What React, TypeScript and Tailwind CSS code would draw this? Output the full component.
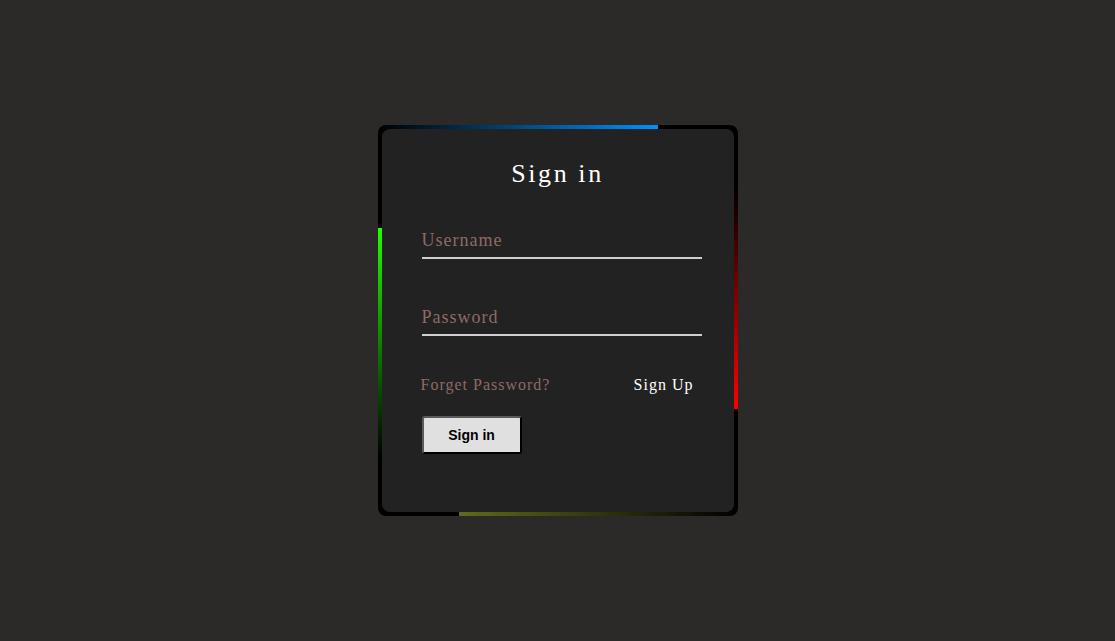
export default function App() {
  return (
    <div className="min-h-screen w-full bg-[#2c2a28] flex items-center justify-center">
      <div className="relative w-[360px] h-[391px] bg-black rounded-[8px] overflow-hidden p-[4px] flex">
        {/* moving border streaks */}
        <span className="absolute left-0 top-0 h-[4px] w-[280px] bg-gradient-to-r from-transparent to-[#0091ff]" />
        <span className="absolute right-0 top-[64px] w-[4px] h-[220px] bg-gradient-to-b from-transparent to-[#ff0000]" />
        <span className="absolute left-[81px] bottom-0 h-[4px] w-[279px] bg-gradient-to-r from-[#606b1a] to-transparent" />
        <span className="absolute left-0 top-[103px] w-[4px] h-[230px] bg-gradient-to-b from-[#22ff00] to-transparent" />

        <div className="relative z-10 flex-1 bg-[#222222] rounded-[8px] flex flex-col items-start pt-[30px] font-['Liberation_Serif',serif]">
          <h2 className="w-full text-center text-white text-[26px] leading-[29px] tracking-[0.1em]">Sign in</h2>

          <div className="ml-[40px] mt-[42px] w-[280px] border-b-2 border-[#cfcfcf] pb-[7px]">
            <span className="block text-[18px] leading-[20px] tracking-[1px] text-[#8f6a65]">Username</span>
          </div>

          <div className="ml-[40px] mt-[48px] w-[280px] border-b-2 border-[#cfcfcf] pb-[7px]">
            <span className="block text-[18px] leading-[20px] tracking-[1px] text-[#8f6a65]">Password</span>
          </div>

          <div className="ml-[40px] mt-[40px] w-[280px] flex justify-between pr-[8px] text-[16px] leading-[18px] tracking-[1px]">
            <a className="text-[#8f6a65] -ml-[1px]">Forget Password?</a>
            <a className="text-white">Sign Up</a>
          </div>

          <button className="ml-[40px] mt-[22px] w-[100px] h-[38px] bg-[#e0e0e0] rounded-[3px] border-2 border-t-[#5a5a5a] border-l-[#5a5a5a] border-b-black border-r-black font-['Liberation_Sans',sans-serif] font-bold text-[14px] text-black">
            Sign in
          </button>
        </div>
      </div>
    </div>
  )
}
